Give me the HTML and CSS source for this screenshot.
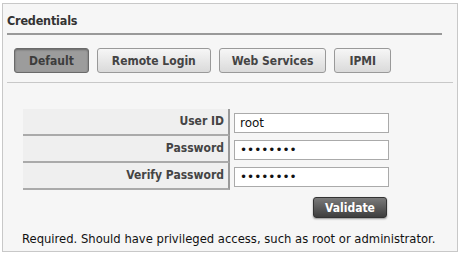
FILE: index.html
```html
<!DOCTYPE html>
<html lang="en">
<head>
  <meta charset="UTF-8">
  <title>Credentials</title>
  <link rel="stylesheet" href="styles.css">
</head>
<body>
  <div class="panel">
    <h2 class="panel-title">Credentials</h2>

    <div class="tabs">
      <button class="tab active">Default</button>
      <button class="tab">Remote Login</button>
      <button class="tab wide">Web Services</button>
      <button class="tab">IPMI</button>
    </div>

    <div class="form">
      <div class="row">
        <label class="label" for="userId">User ID</label>
        <div class="field"><input id="userId" type="text" value="root"></div>
      </div>
      <div class="row">
        <label class="label" for="pass">Password</label>
        <div class="field"><input id="pass" type="password" value="password"></div>
      </div>
      <div class="row">
        <label class="label" for="pass2">Verify Password</label>
        <div class="field"><input id="pass2" type="password" value="password"></div>
      </div>
    </div>

    <div class="actions">
      <button class="btn-dark">Validate</button>
    </div>

    <p class="note">Required. Should have privileged access, such as root or administrator.</p>
  </div>
</body>
</html>
```

FILE: styles.css
```css
* { box-sizing: border-box; }
html, body {
  margin: 0;
  background: #fff;
  font-family: 'DejaVu Sans', sans-serif;
}
body {
  padding: 3px 4px 0 2px;
}
.panel {
  width: 456px;
  height: 249px;
  background: #f6f6f6;
  border: 1px solid #c8c8c8;
  padding: 0 4px;
}
.panel-title {
  margin: 0 11px 0 0;
  padding: 9px 0 5px 0;
  font-family: 'DejaVu Sans Condensed', 'DejaVu Sans', sans-serif;
  font-size: 12.5px;
  letter-spacing: -0.2px;
  font-weight: bold;
  color: #333;
  border-bottom: 2px solid #999;
  line-height: 15px;
}
.tabs {
  display: flex;
  gap: 8px;
  padding: 13px 0 9px 7px;
  border-bottom: 1px solid #c8c8c8;
}
.tab {
  height: 25px;
  padding: 0 14px;
  font-family: 'DejaVu Sans Condensed', 'DejaVu Sans', sans-serif;
  font-size: 12px;
  font-weight: bold;
  color: #444;
  background: linear-gradient(#f6f6f6, #dadada);
  border: 1px solid #999;
  border-radius: 3px;
}
.tab.wide {
  padding: 0 12px;
}
.tab.active {
  background: #9c9c9c;
  border-color: #6a6a6a;
  color: #3c3c3c;
  box-shadow: inset 0 1px 2px rgba(0,0,0,0.35);
}
.form {
  margin: 26px 0 0 16px;
}
.row {
  display: flex;
  height: 27px;
}
.label {
  width: 207px;
  background: #efefef;
  border-right: 2px solid #999;
  border-bottom: 2px solid #aaa;
  text-align: right;
  padding: 5px 4px 0 0;
  font-family: 'DejaVu Sans Condensed', 'DejaVu Sans', sans-serif;
  font-size: 12px;
  font-weight: bold;
  color: #444;
}
.field {
  padding: 3px 0 0 4px;
}
.field input {
  width: 155px;
  height: 20px;
  border: 1px solid #aaa;
  background: #fff;
  font-family: 'DejaVu Sans', sans-serif;
  font-size: 12px;
  padding: 0 5px;
  color: #111;
}
.actions {
  display: flex;
  justify-content: flex-end;
  margin-left: 16px;
  width: 364px;
  margin-top: 7px;
}
.btn-dark {
  width: 74px;
  height: 21px;
  font-family: 'DejaVu Sans Condensed', 'DejaVu Sans', sans-serif;
  font-size: 12px;
  font-weight: bold;
  color: #fff;
  background: linear-gradient(#7a7a7a, #3e3e3e);
  border: 1px solid #333;
  border-radius: 3px;
  box-shadow: 0 1px 2px rgba(0,0,0,0.4);
}
.note {
  margin: 14px 0 0 15px;
  font-size: 11.6px;
  line-height: 14px;
  color: #111;
}
```
